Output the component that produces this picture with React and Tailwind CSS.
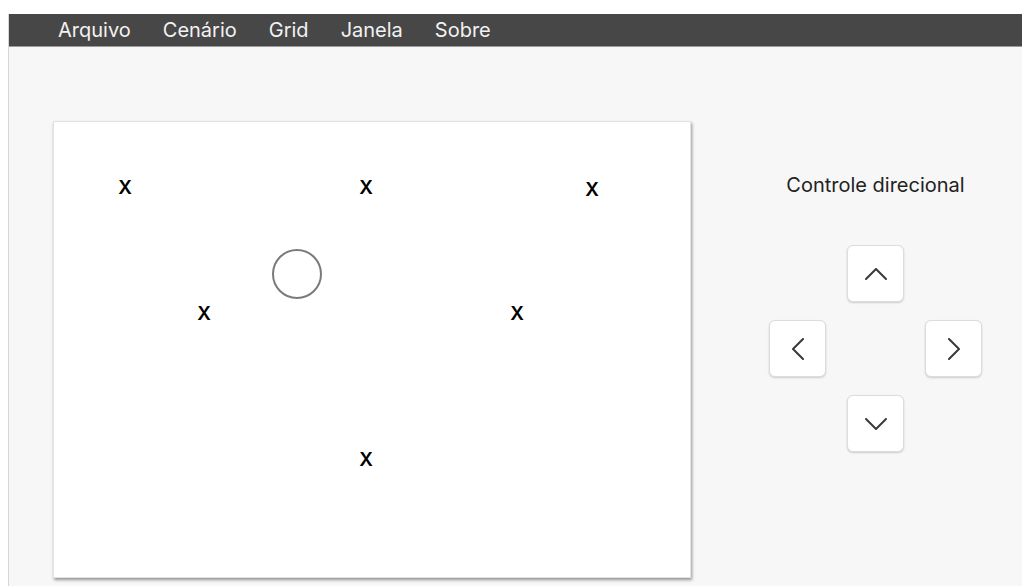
import React from 'react';

const menuItems = ['Arquivo', 'Cenário', 'Grid', 'Janela', 'Sobre'];

// marks placed on the scenario canvas (center coordinates, px)
const marks = [
  { id: 1, x: 71, y: 65 },
  { id: 2, x: 312, y: 65 },
  { id: 3, x: 538, y: 67 },
  { id: 4, x: 150, y: 191 },
  { id: 5, x: 463, y: 191 },
  { id: 6, x: 312, y: 337 },
];

const Chevron = ({ dir }) => {
  const horizontal = dir === 'left' || dir === 'right';
  const points = {
    up: '1,11 11,1 21,11',
    down: '1,1 11,11 21,1',
    left: '11,1 1,11 11,21',
    right: '1,1 11,11 1,21',
  }[dir];
  return (
    <svg
      width={horizontal ? 12 : 22}
      height={horizontal ? 22 : 12}
      viewBox={horizontal ? '0 0 12 22' : '0 0 22 12'}
      fill="none"
      stroke="#3a3a3a"
      strokeWidth="2"
      strokeLinecap="round"
      strokeLinejoin="round"
    >
      <polyline points={points} />
    </svg>
  );
};

const DirButton = ({ dir }) => (
  <button className="w-[57px] h-[57px] bg-white border border-[#dcdcdc] rounded-md shadow-[0_1px_2px_rgba(0,0,0,0.18)] flex items-center justify-center">
    <Chevron dir={dir} />
  </button>
);

export default function App() {
  return (
    <div className="w-[1022px] h-[586px] bg-white pt-[14px] pl-2 overflow-hidden font-['Inter','Liberation_Sans',sans-serif]">
      <div className="h-full flex flex-col border-l border-[#d6d6d6]">
        {/* Menu bar */}
        <div className="h-[33px] bg-[#474747] border-b border-[#9a9a9a] flex items-center pl-[49px] gap-[32px] text-[20px] text-[#f2f2f2] shrink-0">
          {menuItems.map((item) => (
            <span key={item}>{item}</span>
          ))}
        </div>

        {/* Body */}
        <div className="flex-1 bg-[#f7f7f7] flex pt-[74px] pl-[44px]">
          {/* Scenario canvas */}
          <div className="relative w-[638px] h-[457px] bg-white border border-[#e2e2e2] shadow-[1px_2px_3px_rgba(0,0,0,0.4)] shrink-0">
            {marks.map((m) => (
              <span
                key={m.id}
                className="absolute -translate-x-1/2 -translate-y-1/2 text-[19px] font-semibold text-black leading-none"
                style={{ left: m.x, top: m.y }}
              >
                X
              </span>
            ))}
            <div className="absolute left-[218px] top-[127px] w-[50px] h-[50px] rounded-full border-2 border-[#7a7a7a]" />
          </div>

          {/* Directional control */}
          <div className="flex-1 flex flex-col items-center pl-[38px] pt-[52px]">
            <h3 className="text-[20px] text-[#222] leading-6">Controle direcional</h3>
            <div className="mt-[48px] grid grid-cols-[57px_57px_57px] grid-rows-[57px_57px_57px] gap-x-[21px] gap-y-[18px]">
              <div />
              <DirButton dir="up" />
              <div />
              <DirButton dir="left" />
              <div />
              <DirButton dir="right" />
              <div />
              <DirButton dir="down" />
              <div />
            </div>
          </div>
        </div>
      </div>
    </div>
  );
}
